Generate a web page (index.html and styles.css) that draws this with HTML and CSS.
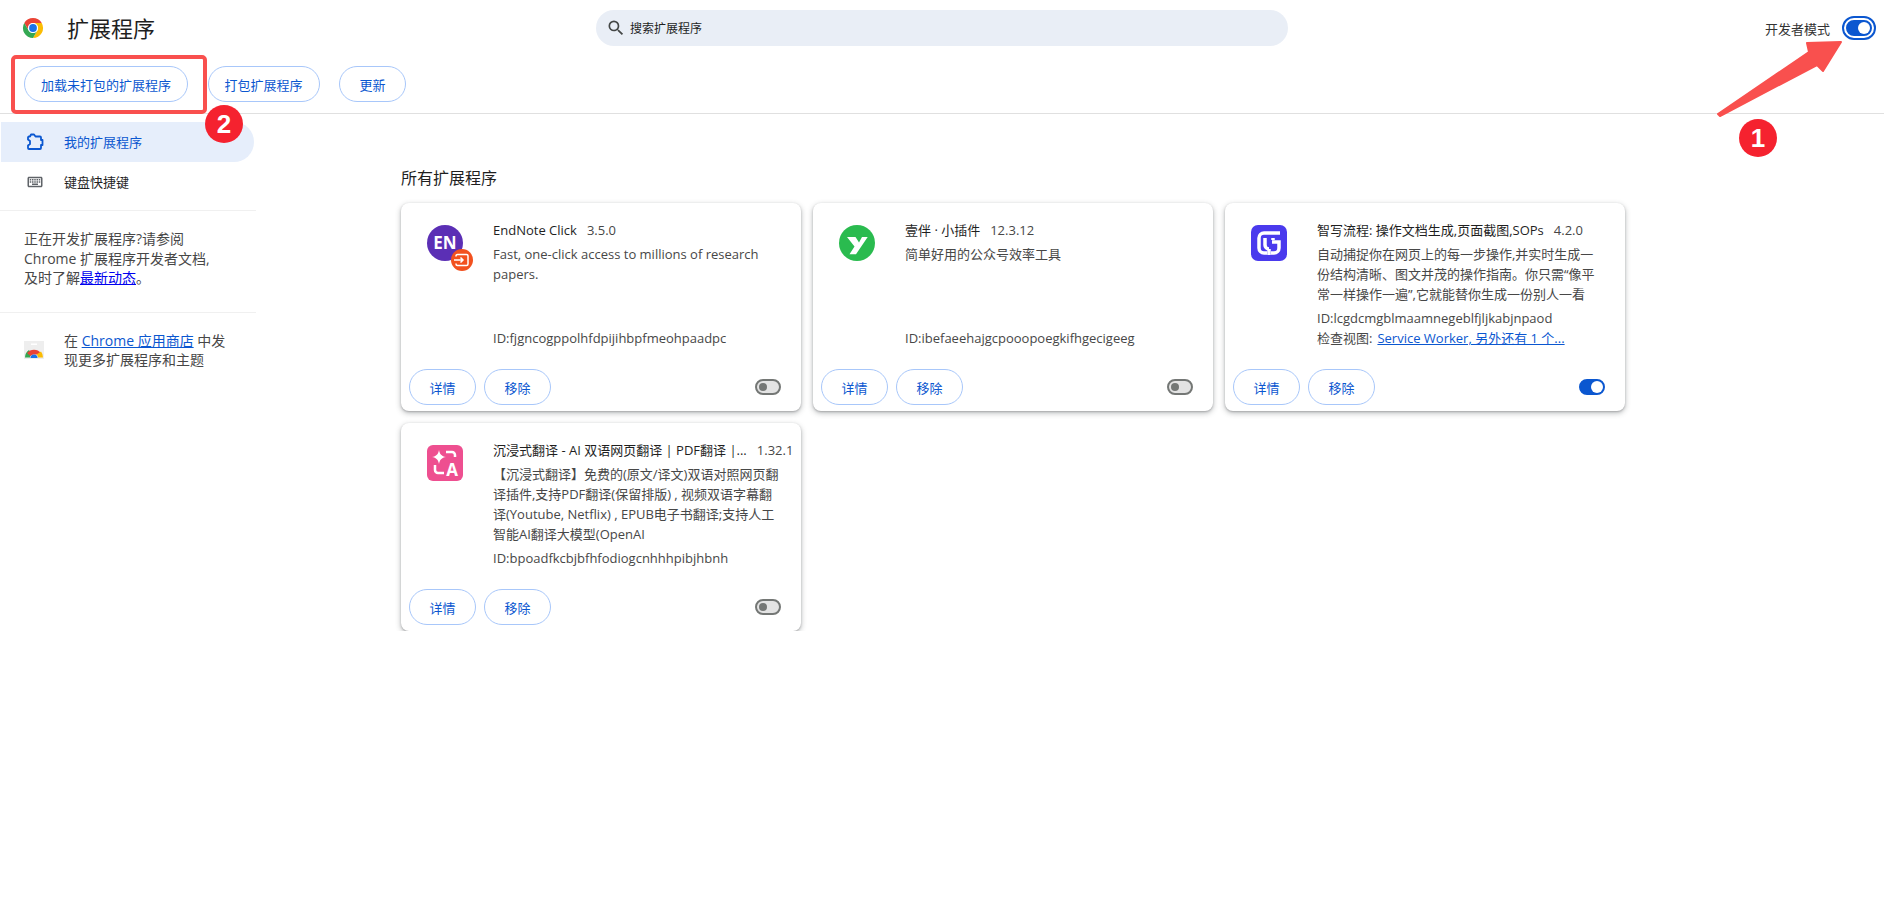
FILE: index.html
```html
<!DOCTYPE html>
<html lang="zh-CN">
<head>
  <meta charset="UTF-8">
  <title>扩展程序</title>
  <link rel="stylesheet" href="styles.css">
</head>
<body>
  <header class="top-bar">
    <div class="brand">
      <svg class="chrome-logo" viewBox="0 0 48 48">
        <path fill="#ea4335" d="M4.95 13A22 22 0 0 1 43.05 13H24A11 11 0 0 0 14.47 29.5Z"/>
        <path fill="#fbbc04" d="M43.05 13A22 22 0 0 1 24 46L33.53 29.5A11 11 0 0 0 24 13Z"/>
        <path fill="#34a853" d="M24 46A22 22 0 0 1 4.95 13L14.47 29.5A11 11 0 0 0 33.53 29.5Z"/>
        <circle cx="24" cy="24" r="11" fill="#fff"/>
        <circle cx="24" cy="24" r="8.5" fill="#1a73e8"/>
      </svg>
      <h1>扩展程序</h1>
    </div>
    <div class="search">
      <svg viewBox="0 0 24 24"><path d="M15.5 14h-.79l-.28-.27A6.47 6.47 0 0 0 16 9.5 6.5 6.5 0 1 0 9.5 16c1.61 0 3.09-.59 4.23-1.57l.27.28v.79l5 4.99L20.49 19l-4.99-5zm-6 0C7.01 14 5 11.99 5 9.5S7.01 5 9.5 5 14 7.01 14 9.5 11.99 14 9.5 14z"/></svg>
      <span>搜索扩展程序</span>
    </div>
    <div class="dev-mode">
      <span>开发者模式</span>
      <span class="toggle on focused"></span>
    </div>
  </header>

  <div class="toolbar">
    <button class="pill">加载未打包的扩展程序</button>
    <button class="pill">打包扩展程序</button>
    <button class="pill">更新</button>
  </div>

  <div class="layout">
    <aside class="sidebar">
      <a class="nav-item active">
        <svg viewBox="0 0 18 18"><path class="puzzle" d="M4 3.500L5 1.500H8L9.500 3.500H14a1 1 0 0 1 1 1V7h1.500v5H15v3a1 1 0 0 1-1 1H3a1 1 0 0 1-1-1v-2.500l2-1.500v-3L2 6.500v-2a1 1 0 0 1 1-1Z"/></svg>
        <span>我的扩展程序</span>
      </a>
      <a class="nav-item">
        <svg viewBox="0 0 24 24"><path fill="#5f6368" d="M20 5H4c-1.1 0-1.99.9-1.99 2L2 17c0 1.1.9 2 2 2h16c1.1 0 2-.9 2-2V7c0-1.1-.9-2-2-2zm0 12H4V7h16v10zM11 8h2v2h-2V8zm0 3h2v2h-2v-2zM8 8h2v2H8V8zm0 3h2v2H8v-2zm-1 2H5v-2h2v2zm0-3H5V8h2v2zm9 6H8v-2h8v2zm0-3h-2v-2h2v2zm0-3h-2V8h2v2zm3 3h-2v-2h2v2zm0-3h-2V8h2v2z"/></svg>
        <span>键盘快捷键</span>
      </a>
      <div class="side-section">
        正在开发扩展程序?请参阅<br>
        Chrome 扩展程序开发者文档,<br>
        及时了解<a class="news-link">最新动态</a>。
      </div>
      <div class="side-section store">
        <svg viewBox="0 0 20 18">
          <rect width="20" height="18" fill="#eeeeee"/>
          <rect x="7" y="2.5" width="6" height="1.5" fill="#fff"/>
          <path fill="#34a853" d="M1 16.5a9 9 0 0 1 4-7.5l2.6 4.3a4 4 0 0 0-1.6 3.2z"/>
          <path fill="#ea4335" d="M3 12a9 9 0 0 1 14 0l-1 1.5H10.500A4 4 0 0 0 6.500 15z"/>
          <path fill="#fbbc04" d="M17 10.500a9 9 0 0 1 2 6h-5a4 4 0 0 0-1.500-3z"/>
          <path fill="#1a73e8" d="M6.500 17a3.500 3.500 0 0 1 7 0z"/>
        </svg>
        <p>在 <a class="store-link">Chrome 应用商店</a> 中发<br>现更多扩展程序和主题</p>
      </div>
    </aside>

    <main class="content">
      <h2>所有扩展程序</h2>
      <div class="cards">

        <section class="card">
          <div class="card-main">
            <svg class="ext-icon en-icon" viewBox="0 0 48 44">
              <circle cx="18" cy="18" r="18" fill="#5b2fb5"/>
              <text x="18" y="24" class="en-text">EN</text>
              <circle cx="35" cy="35" r="11" fill="#f2511f"/>
              <path d="M29 31.500V31a1.500 1.500 0 0 1 1.500-1.500h9a1.500 1.500 0 0 1 1.500 1.500v8a1.500 1.500 0 0 1-1.500 1.500h-9A1.500 1.500 0 0 1 29 39v-.5M27 35h9m-2.500-2.500L36 35l-2.500 2.500" fill="none" stroke="#fff" stroke-width="1.500"/>
            </svg>
            <div class="ext-text">
              <div class="ext-name"><span>EndNote Click</span><span class="version">3.5.0</span></div>
              <div class="ext-desc">Fast, one-click access to millions of research papers.</div>
              <div class="ext-meta">
                <div>ID:fjgncogppolhfdpijihbpfmeohpaadpc</div>
              </div>
            </div>
          </div>
          <div class="card-footer">
            <button class="pill small">详情</button>
            <button class="pill small">移除</button>
            <span class="toggle"></span>
          </div>
        </section>

        <section class="card">
          <div class="card-main">
            <svg class="ext-icon" viewBox="0 0 36 36">
              <circle cx="18" cy="18" r="18" fill="#2abb4f"/>
              <path fill="#fff" d="M8 12H16.500L20 17.500 23 12H28.700L17 29.300H10.500L15.500 21.500Z"/>
            </svg>
            <div class="ext-text">
              <div class="ext-name"><span>壹伴 · 小插件</span><span class="version">12.3.12</span></div>
              <div class="ext-desc">简单好用的公众号效率工具</div>
              <div class="ext-meta">
                <div>ID:ibefaeehajgcpooopoegkifhgecigeeg</div>
              </div>
            </div>
          </div>
          <div class="card-footer">
            <button class="pill small">详情</button>
            <button class="pill small">移除</button>
            <span class="toggle"></span>
          </div>
        </section>

        <section class="card">
          <div class="card-main">
            <svg class="ext-icon" viewBox="0 0 36 36">
              <rect width="36" height="36" rx="7" fill="#4a3aed"/>
              <path d="M29 8H13a5 5 0 0 0-5 5v10a5 5 0 0 0 5 5h3M21 17H28v6a5 5 0 0 1-5 5h-3M14 13v7a4 4 0 0 0 4 4M18 24v6M22 13v2" fill="none" stroke="#fff" stroke-width="3.500"/>
            </svg>
            <div class="ext-text">
              <div class="ext-name"><span>智写流程: 操作文档生成,页面截图,SOPs</span><span class="version">4.2.0</span></div>
              <div class="ext-desc">自动捕捉你在网页上的每一步操作,并实时生成一份结构清晰、图文并茂的操作指南。你只需“像平常一样操作一遍”,它就能替你生成一份别人一看</div>
              <div class="ext-meta">
                <div>ID:lcgdcmgblmaamnegeblfjljkabjnpaod</div>
                <div>检查视图:<a class="inspect-link">Service Worker, 另外还有 1 个...</a></div>
              </div>
            </div>
          </div>
          <div class="card-footer">
            <button class="pill small">详情</button>
            <button class="pill small">移除</button>
            <span class="toggle on"></span>
          </div>
        </section>

        <section class="card">
          <div class="card-main">
            <svg class="ext-icon" viewBox="0 0 36 36">
              <rect width="36" height="36" rx="6" fill="#ee4f90"/>
              <path fill="#fff" d="M12 5c.8 4.400 2.600 6.200 7 7-4.400.8-6.200 2.600-7 7-.8-4.400-2.600-6.200-7-7 4.400-.8 6.200-2.600 7-7z"/>
              <path d="M19 7h6a3 3 0 0 1 3 3v2M8 20v5a3 3 0 0 0 3 3h6" fill="none" stroke="#fff" stroke-width="2.500"/>
              <text x="25" y="31" class="a-text">A</text>
            </svg>
            <div class="ext-text">
              <div class="ext-name"><span>沉浸式翻译 - AI 双语网页翻译 | PDF翻译 |...</span><span class="version">1.32.1</span></div>
              <div class="ext-desc">【沉浸式翻译】免费的(原文/译文)双语对照网页翻译插件,支持PDF翻译(保留排版) , 视频双语字幕翻译(Youtube, Netflix) , EPUB电子书翻译;支持人工智能AI翻译大模型(OpenAI</div>
              <div class="ext-meta">
                <div>ID:bpoadfkcbjbfhfodiogcnhhhpibjhbnh</div>
              </div>
            </div>
          </div>
          <div class="card-footer">
            <button class="pill small">详情</button>
            <button class="pill small">移除</button>
            <span class="toggle"></span>
          </div>
        </section>

      </div>
    </main>
  </div>

  <!-- tutorial annotations drawn over the page -->
  <svg class="arrow" viewBox="0 0 130 80">
    <path d="M2 75L93 13 91 4 125 3 107 32 101 26 4 77Z" fill="#f9504e" stroke="#f9504e" stroke-width="2" stroke-linejoin="round"/>
  </svg>
  <div class="mark-box"></div>
  <div class="badge badge-one">1</div>
  <div class="badge badge-two">2</div>
</body>
</html>
```

FILE: styles.css
```css
* {
  box-sizing: border-box;
}

body {
  margin: 0;
  background: #fff;
  color: #1f1f1f;
  font-family: "Open Sans", "Noto Sans CJK SC", sans-serif;
  font-size: 13px;
  font-stretch: 95%;
  overflow: hidden;
}

a {
  text-decoration: none;
}

.top-bar {
  display: grid;
  grid-template-columns: 1fr 692px 1fr;
  align-items: center;
  height: 56px;
}

.brand {
  display: flex;
  align-items: center;
  padding-left: 22px;
}

.chrome-logo {
  width: 22px;
  height: 22px;
}

h1 {
  margin: 0 0 0 23px;
  font-size: 22px;
  font-weight: 400;
  line-height: 30px;
}

.search {
  display: flex;
  align-items: center;
  gap: 4px;
  height: 36px;
  padding-left: 10px;
  border-radius: 18px;
  background: #e9eef6;
  font-size: 12px;
  color: #1f1f1f;
}

.search svg {
  width: 20px;
  height: 20px;
  fill: #444746;
}

.dev-mode {
  display: flex;
  justify-content: flex-end;
  align-items: center;
  gap: 16px;
  padding-right: 12px;
  color: #333;
}

.toggle {
  position: relative;
  display: block;
  width: 26px;
  height: 16px;
  border-radius: 8px;
  border: 2px solid #747775;
  background: #e3e3e3;
}

.toggle::after {
  content: "";
  position: absolute;
  left: 2px;
  top: 2px;
  width: 8px;
  height: 8px;
  border-radius: 50%;
  background: #747775;
}

.toggle.on {
  border-color: #0b57d0;
  background: #0b57d0;
}

.toggle.on::after {
  left: 10px;
  top: 0;
  width: 12px;
  height: 12px;
  background: #fff;
}

.toggle.focused {
  outline: 2px solid #0b57d0;
  outline-offset: 2px;
}

.toolbar {
  display: flex;
  gap: 19.5px;
  height: 58px;
  padding: 10px 0 0 24px;
  border-bottom: 1px solid #e0e0e0;
}

.pill {
  height: 36px;
  min-width: 67px;
  padding: 0 16px;
  border: 1px solid #a8c7fa;
  border-radius: 18px;
  background: #fff;
  color: #0b57d0;
  font-family: inherit;
  font-size: 13px;
}

.layout {
  display: flex;
}

.sidebar {
  width: 256px;
  padding-top: 8px;
  font-size: 14px;
}

.nav-item {
  display: flex;
  align-items: center;
  gap: 20px;
  width: 253px;
  height: 40px;
  margin-left: 1px;
  padding-left: 25px;
  border-radius: 0 20px 20px 0;
  color: #1f1f1f;
  font-size: 13px;
}

.nav-item span {
  margin-bottom: 2px;
}

.nav-item svg {
  width: 18px;
  height: 18px;
}

.nav-item.active {
  background: #e6eefb;
  color: #0b57d0;
}

.puzzle {
  fill: none;
  stroke: #0b57d0;
  stroke-width: 1.8;
  stroke-linejoin: round;
}

.side-section {
  margin-top: 8px;
  padding: 18px 24px 24px;
  border-top: 1px solid #f0f0f0;
  color: #474747;
  line-height: 19.5px;
}

.side-section.store {
  display: flex;
  gap: 20px;
  margin-top: 0;
  padding-top: 18px;
}

.store svg {
  flex: none;
  width: 20px;
  height: 18px;
  margin-top: 10px;
}

.store p {
  margin: 0;
}

.news-link {
  color: #0000ee;
  text-decoration: underline;
}

.store-link,
.inspect-link {
  color: #0b57d0;
  text-decoration: underline;
}

.content {
  margin-left: 145px;
}

h2 {
  margin: 0;
  padding-top: 53px;
  font-size: 16px;
  font-weight: 400;
  line-height: 22px;
}

.cards {
  display: grid;
  grid-template-columns: repeat(3, 400px);
  gap: 12px;
  margin-top: 14px;
}

.card {
  display: flex;
  flex-direction: column;
  height: 208px;
  padding-bottom: 6px;
  border-radius: 8px;
  background: #fff;
  box-shadow: 0 1px 2px rgba(60, 64, 67, .3), 0 2px 5px 1px rgba(60, 64, 67, .25);
}

.card-main {
  display: flex;
  flex: 1;
  padding: 17px 20px 21px 26px;
}

.ext-icon {
  flex: none;
  width: 36px;
  height: 36px;
  margin: 5px 30px 0 0;
  overflow: visible;
}

.ext-icon.en-icon {
  width: 48px;
  height: 44px;
  margin-right: 18px;
}

.en-text {
  fill: #fff;
  font-size: 17px;
  font-weight: 700;
  text-anchor: middle;
}

.a-text {
  fill: #fff;
  font-size: 17px;
  font-weight: 700;
  text-anchor: middle;
}

.ext-text {
  display: flex;
  flex-direction: column;
  width: 288px;
  line-height: 20px;
}

.ext-name {
  display: flex;
  gap: 10px;
  white-space: nowrap;
}

.version {
  color: #474747;
}

.ext-desc {
  margin-top: 4px;
  color: #474747;
}

.ext-meta {
  margin-top: auto;
  color: #474747;
  white-space: nowrap;
}

.inspect-link {
  margin-left: 5px;
}

.card-footer {
  display: flex;
  align-items: center;
  gap: 8px;
  padding: 0 20px 0 8px;
}

.card-footer .toggle {
  margin-left: auto;
}

.pill.small {
  width: 67px;
  padding: 0;
}

.arrow {
  position: absolute;
  left: 1716px;
  top: 39px;
  width: 130px;
  height: 80px;
}

.mark-box {
  position: absolute;
  left: 11px;
  top: 55px;
  width: 196px;
  height: 59px;
  border: 4px solid #f9504e;
  border-radius: 5px;
}

.badge {
  position: absolute;
  width: 38px;
  height: 38px;
  border-radius: 50%;
  background: #f5222f;
  color: #fff;
  font-family: "Liberation Sans", sans-serif;
  font-size: 26px;
  font-weight: 700;
  line-height: 38px;
  text-align: center;
}

.badge-one {
  left: 1739px;
  top: 119px;
}

.badge-two {
  left: 205px;
  top: 105px;
}
```
